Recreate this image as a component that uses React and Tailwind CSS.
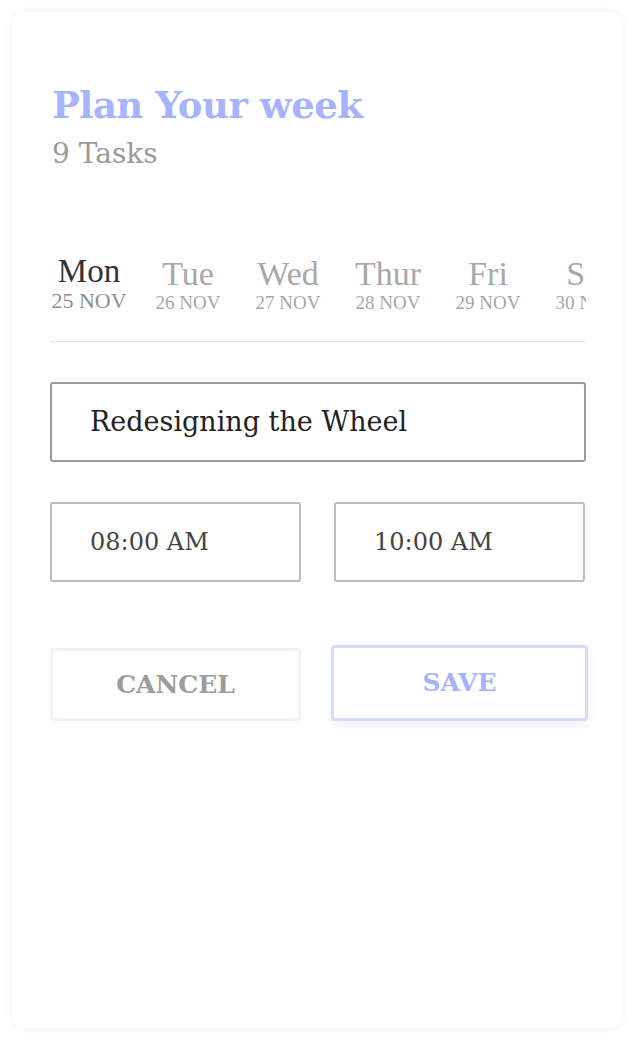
import React from "react";

const days = [
  { name: "Mon", date: "25 NOV", active: true, cls: "w-[78px]" },
  { name: "Tue", date: "26 NOV", cls: "w-[66px] ml-[27px]" },
  { name: "Wed", date: "27 NOV", cls: "w-[66px] ml-[34px]" },
  { name: "Thur", date: "28 NOV", cls: "w-[66px] ml-[34px]" },
  { name: "Fri", date: "29 NOV", cls: "w-[66px] ml-[34px]" },
  { name: "Sat", date: "30 NOV", cls: "w-[66px] ml-[34px]" },
];

const serif = "font-['DejaVu_Serif',serif]";
const times = "font-['Liberation_Serif',serif]";

export default function App() {
  return (
    <div className="w-[642px] h-[1048px] bg-white pt-3 pl-3">
      <div className="w-[610px] h-[1016px] rounded-xl bg-white shadow-[0_0_6px_2px_rgba(0,0,0,0.04)] pl-[38px] pr-[36px] pt-[70px]">
        {/* Header */}
        <h1 className={`${serif} pl-[2px] text-[37px] leading-[46px] font-bold text-[#a7b3ff] tracking-[-0.5px]`}>
          Plan Your week
        </h1>
        <p className={`${serif} pl-[2px] text-[28px] leading-[36px] text-[#9a9a9a] mt-[8px]`}>9 Tasks</p>

        {/* Days */}
        <div className="mt-[82px] overflow-hidden border-b border-[#e6e6e6] pb-[26px]">
          <div className="flex">
            {days.map((d) => (
              <div key={d.name} className={`${times} ${d.cls} shrink-0 flex flex-col items-center`}>
                <span
                  className={
                    d.active
                      ? "text-[33px] leading-[34px] text-[#333] whitespace-nowrap"
                      : "text-[34px] leading-[34px] text-[#a8a8a8] mt-[3px] whitespace-nowrap"
                  }
                >
                  {d.name}
                </span>
                <span
                  className={
                    d.active
                      ? "text-[22px] leading-[26px] text-[#8e8e8e] whitespace-nowrap"
                      : "text-[19px] leading-[24px] text-[#a6a6a6] whitespace-nowrap"
                  }
                >
                  {d.date}
                </span>
              </div>
            ))}
          </div>
        </div>

        {/* Task name */}
        <div className="mt-[40px] h-[80px] rounded-[3px] border-2 border-[#9c9c9c] flex items-center pl-[38px]">
          <span className={`${serif} text-[27px] text-[#222]`}>Redesigning the Wheel</span>
        </div>

        {/* Times */}
        <div className="mt-[40px] flex gap-[33px]">
          <div className="w-[251px] shrink-0 h-[80px] rounded-[3px] border-2 border-[#bdbdbd] flex items-center pl-[38px]">
            <span className={`${serif} text-[24px] text-[#444]`}>08:00 AM</span>
          </div>
          <div className="w-[251px] shrink-0 h-[80px] rounded-[3px] border-2 border-[#bdbdbd] flex items-center pl-[38px]">
            <span className={`${serif} text-[24px] text-[#444]`}>10:00 AM</span>
          </div>
        </div>

        {/* Actions */}
        <div className="mt-[63px] flex gap-[30px] items-start">
          <button className={`${serif} w-[251px] shrink-0 h-[73px] mt-[3px] rounded-[3px] border-[3px] border-[#f1f1fb] text-[25px] font-bold text-[#9c9c9c]`}>
            CANCEL
          </button>
          <button className={`${serif} w-[257px] shrink-0 h-[76px] rounded-[4px] border-[3px] border-[#d4dcff] text-[25px] font-bold text-[#a7b3ff] shadow-[0_4px_10px_rgba(0,0,0,0.06)]`}>
            SAVE
          </button>
        </div>
      </div>
    </div>
  );
}
